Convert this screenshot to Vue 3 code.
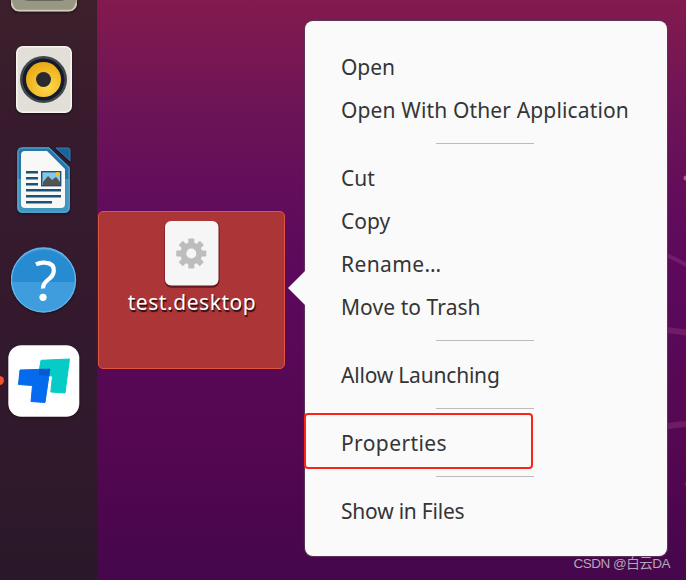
<script setup>
const groups = [
  [
    { label: 'Open', spacing: -0.05 },
    { label: 'Open With Other Application', spacing: 0.14 },
  ],
  [
    { label: 'Cut', spacing: 0 },
    { label: 'Copy', spacing: 0 },
    { label: 'Rename…', spacing: 0.4 },
    { label: 'Move to Trash', spacing: 0.07 },
  ],
  [{ label: 'Allow Launching', spacing: -0.2 }],
  [{ label: 'Properties', spacing: 0.4, marked: true }],
  [{ label: 'Show in Files', spacing: -0.22 }],
]
const teeth = [0, 45, 90, 135, 180, 225, 270, 315]
</script>

<template>
  <div class="desktop">
    <svg class="wallpaper" width="686" height="580" viewBox="0 0 686 580">
      <g fill="none" stroke="#a2458b" stroke-opacity=".32">
        <path d="M660 252Q674 258 690 267" stroke-width="4" />
        <path d="M660 329L690 333" stroke-width="6" />
        <path d="M660 428Q676 424 690 424" stroke-width="6" />
      </g>
      <circle cx="686" cy="178" r="2.5" fill="#b05b9c" />
      <circle cx="687" cy="484" r="2" fill="#7b286f" />
    </svg>

    <nav class="dock">
      <div class="cell first">
        <svg width="66" height="66" viewBox="0 0 66 66">
          <rect x=".5" y="1" width="65" height="64" rx="7" fill="#989783" stroke="#c0bea8" />
          <path d="M1 57Q2 64.5 8 64.5H58Q64 64.5 65 57" fill="none" stroke="#d0ceba" stroke-width="1.5" />
          <path d="M11 53Q14 55 20 55H47Q53 55 56 53Z" fill="#686957" />
        </svg>
      </div>
      <div class="cell">
        <svg width="56" height="67" viewBox="0 0 56 67">
          <defs>
            <radialGradient id="cone" cx=".6" cy=".7" r=".7">
              <stop offset="0" stop-color="#ffd94d" /><stop offset="1" stop-color="#e9aa13" />
            </radialGradient>
          </defs>
          <rect x=".8" y=".8" width="54.4" height="65.4" rx="6" fill="#e2dfd9" stroke="#f7f4f0" stroke-width="1.6" />
          <circle cx="27.5" cy="33.5" r="23.5" fill="#42484b" />
          <circle cx="27.5" cy="33.5" r="21" fill="#141b2c" />
          <circle cx="27.5" cy="33.5" r="17.5" fill="url(#cone)" />
          <circle cx="27.5" cy="33.5" r="7.5" fill="#2b2930" />
        </svg>
      </div>
      <div class="cell">
        <svg width="56" height="68" viewBox="0 0 56 68">
          <path d="M6 1H33L54 21V61Q54 67 48 67H7Q1 67 1 61V7Q1 1 6 1Z" fill="#2676a8" />
          <path d="M1 33H54V61Q54 67 48 67H7Q1 67 1 61Z" fill="#4196bf" />
          <path d="M7 2H33L53 22V60Q53 66 47 66H8Q2 66 2 60V7Q2 2 7 2Z" fill="none" stroke="#5ba9d1" />
          <path d="M9 5H31L49 23V58Q49 62 45 62H9Q5 62 5 58V9Q5 5 9 5Z" fill="#f8f8f6" />
          <path d="M40 2H52Q54 2 54 4V15Z" fill="#19659b" stroke="#357da9" />
          <path d="M10 26.3H22M10 32.3H22M10 38.3H22M10 44.3H45M10 50.3H45M10 56.3H36" stroke="#1a527a" stroke-width="2.4" />
          <rect x="25.7" y="25.7" width="19" height="14" fill="#80c9e8" stroke="#1a527a" stroke-width="1.4" />
          <path d="M27 39V36L32 30L36 34L40 31L44 36V39Z" fill="#535353" />
          <circle cx="41.7" cy="28.3" r="2.2" fill="#f3c32b" />
        </svg>
      </div>
      <div class="cell">
        <svg width="66" height="66" viewBox="0 0 66 66">
          <circle cx="32.5" cy="33" r="32.2" fill="#409ddd" />
          <path d="M.5 35A32 32 0 1 1 64.5 35Z" fill="#268bd1" />
          <circle cx="32.5" cy="33" r="32" fill="none" stroke="#65b2e5" stroke-width="1.4" />
          <path d="M25 17.3Q29.5 15 34.5 15.7Q43.3 16.6 42.8 24Q42.5 28.6 37.5 32.4Q31.8 36.5 32.1 41.5" fill="none" stroke="#fff" stroke-width="4.2" />
          <circle cx="32" cy="50.3" r="3.6" fill="#fff" />
        </svg>
      </div>
      <div class="cell active">
        <svg width="72" height="72" viewBox="0.5 0 72 72">
          <rect x=".8" y=".3" width="71" height="71.4" rx="13" fill="#fff" />
          <path d="M33.5 15.3L62 14L57.5 48L43.3 47L45 31L31 30Z" fill="#06cbc7" stroke="#06cbc7" stroke-linejoin="round" />
          <path d="M12.5 25L42.4 24L37.5 57.5L23.5 56.5L25 40.5L11 39.5Z" fill="#046bef" stroke="#046bef" stroke-linejoin="round" />
          <path d="M32 24.2L42.4 24L41.5 31L31 30Z" fill="#0759cc" />
        </svg>
      </div>
    </nav>

    <div class="file">
      <svg width="56" height="68" viewBox="0 0 56 68">
        <rect x=".5" y="1.2" width="55" height="66.5" rx="7" fill="#671920" />
        <rect x="1" y="1" width="53.5" height="64.5" rx="6" fill="#f7f6f7" />
        <g transform="translate(27.3 33.5)" fill="#bdbdbd">
          <rect v-for="a in teeth" :key="a" x="-3" y="-15" width="6" height="8" rx=".8" :transform="`rotate(${a})`" />
          <circle r="8" fill="none" stroke="#bdbdbd" stroke-width="6" />
        </g>
      </svg>
      <span class="filename">test.desktop</span>
    </div>

    <div class="menu">
      <template v-for="(group, i) in groups" :key="i">
        <div v-if="i" class="separator"></div>
        <div v-for="item in group" :key="item.label" class="item" :class="{ marked: item.marked }">
          <span :style="{ letterSpacing: item.spacing + 'px' }">{{ item.label }}</span>
        </div>
      </template>
    </div>

    <div class="watermark">CSDN @白云DA</div>
  </div>
</template>

<style>
body { margin: 0; overflow: hidden; }
</style>

<style scoped>
.desktop {
  position: relative;
  display: flex;
  width: 686px;
  height: 580px;
  overflow: hidden;
  background: linear-gradient(180deg, #841a4e 0, #771753 60px, #6b1358 120px, #620d5b 200px, #5c095c 270px, #550851 430px, #4c064d 520px, #45074b 580px);
  font-family: "Noto Sans", "Open Sans", sans-serif;
}
.wallpaper { position: absolute; inset: 0; }
.dock {
  position: relative;
  box-sizing: border-box;
  width: 97px;
  flex: none;
  padding-right: 10px;
  background: linear-gradient(180deg, #3c202b 0, #371b2d 130px, #34192e 330px, #2f192b 480px, #291829 580px);
}
.cell {
  position: relative;
  display: flex;
  height: 100.5px;
  align-items: center;
  justify-content: center;
}
.cell svg { display: block; filter: drop-shadow(0 1px 1px #1a0d19); }
.cell.first { margin-top: -71.5px; }
.active::before {
  content: "";
  position: absolute;
  left: -5px;
  top: 45.5px;
  width: 9px;
  height: 9px;
  border-radius: 50%;
  background: #ee5529;
}
.file {
  position: relative;
  box-sizing: border-box;
  display: flex;
  flex-direction: column;
  align-items: center;
  width: 187px;
  height: 158px;
  margin: 211px 0 0 1px;
  padding-top: 8px;
  border: 1px solid #df553d;
  border-radius: 5px;
  background: #ac3537;
}
.file svg { display: block; }
.filename {
  padding-left: 1px;
  color: #fff;
  font-size: 21px;
  line-height: 28px;
  letter-spacing: .55px;
  text-shadow: 1px 1.5px 1px #210b10;
}
.menu {
  position: absolute;
  left: 305px;
  top: 21px;
  box-sizing: border-box;
  width: 362px;
  height: 535px;
  padding: 24px 36px;
  border-radius: 8px;
  background: #fafafa;
  box-shadow: 0 0 1px 1px #5a3859;
}
.menu::before {
  content: "";
  position: absolute;
  left: -17px;
  top: 249px;
  border: 18px solid transparent;
  border-left: 0;
  border-right: 18px solid #fafafa;
}
.item {
  position: relative;
  display: flex;
  height: 43px;
  align-items: center;
  color: #353535;
  font-size: 21px;
  line-height: 28px;
  white-space: nowrap;
}
.separator {
  width: 98px;
  height: 1px;
  margin: 12px 0 12px 95px;
  background: #bdbbbd;
}
.marked::after {
  content: "";
  position: absolute;
  box-sizing: border-box;
  left: -37px;
  top: -8px;
  width: 229px;
  height: 56px;
  border: 2px solid #fb2418;
  border-radius: 4px;
}
.watermark {
  position: absolute;
  right: 16px;
  bottom: 7px;
  color: #b5a5b9;
  font-family: "Liberation Sans", "Noto Sans CJK SC", sans-serif;
  font-size: 13.5px;
  letter-spacing: -.5px;
  line-height: 18px;
  white-space: nowrap;
}
</style>
